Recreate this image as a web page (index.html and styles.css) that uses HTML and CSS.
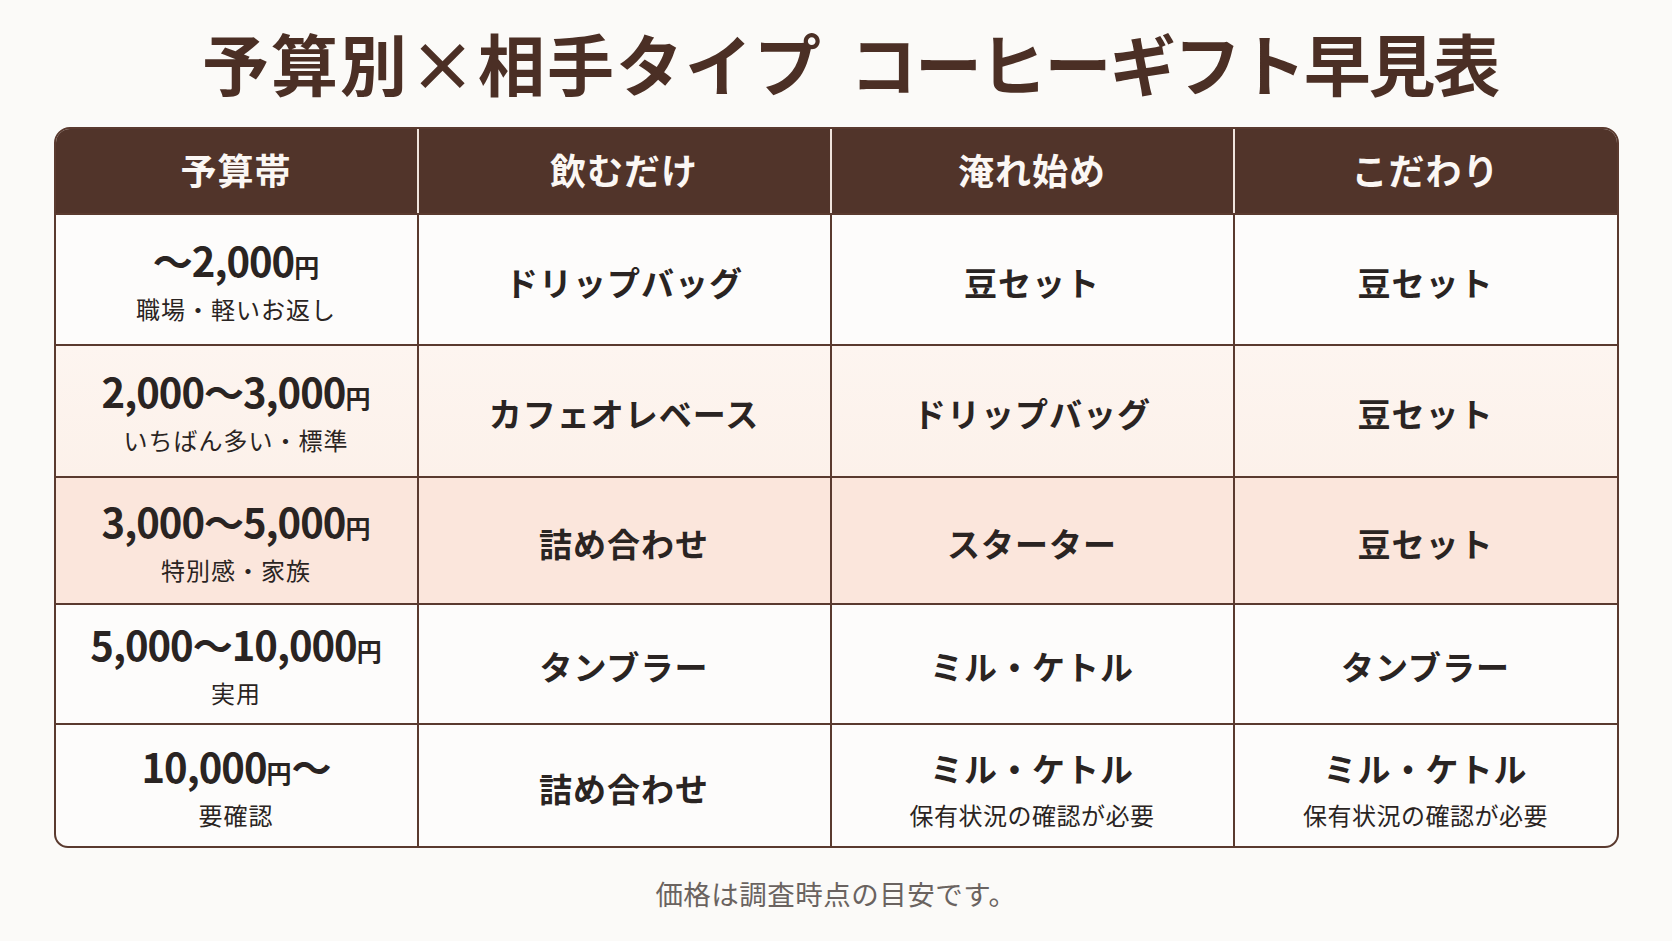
FILE: index.html
```
<!DOCTYPE html>
<html lang="ja">
<head>
<meta charset="utf-8">
<title>予算別×相手タイプ コーヒーギフト早見表</title>
<link rel="stylesheet" href="styles.css">
</head>
<body>
<main class="page">
  <h1 class="title"><span class="t1">予算別×相手タイプ</span> <span class="t2">コーヒーギフト早見表</span></h1>
  <div class="chart">
    <div class="cell head">予算帯</div>
    <div class="cell head">飲むだけ</div>
    <div class="cell head">淹れ始め</div>
    <div class="cell head">こだわり</div>

    <div class="cell band"><div class="price">〜2,000<span class="yen">円</span></div><div class="sub">職場・軽いお返し</div></div>
    <div class="cell item">ドリップバッグ</div>
    <div class="cell item">豆セット</div>
    <div class="cell item">豆セット</div>

    <div class="cell band tint1"><div class="price">2,000〜3,000<span class="yen">円</span></div><div class="sub">いちばん多い・標準</div></div>
    <div class="cell item tint1">カフェオレベース</div>
    <div class="cell item tint1">ドリップバッグ</div>
    <div class="cell item tint1">豆セット</div>

    <div class="cell band tint2"><div class="price">3,000〜5,000<span class="yen">円</span></div><div class="sub">特別感・家族</div></div>
    <div class="cell item tint2">詰め合わせ</div>
    <div class="cell item tint2">スターター</div>
    <div class="cell item tint2">豆セット</div>

    <div class="cell band"><div class="price">5,000〜10,000<span class="yen">円</span></div><div class="sub">実用</div></div>
    <div class="cell item">タンブラー</div>
    <div class="cell item">ミル・ケトル</div>
    <div class="cell item">タンブラー</div>

    <div class="cell band"><div class="price">10,000<span class="yen">円</span>〜</div><div class="sub">要確認</div></div>
    <div class="cell item">詰め合わせ</div>
    <div class="cell item two"><div>ミル・ケトル</div><div class="sub">保有状況の確認が必要</div></div>
    <div class="cell item two"><div>ミル・ケトル</div><div class="sub">保有状況の確認が必要</div></div>
  </div>
  <p class="note">価格は調査時点の目安です。</p>
</main>
</body>
</html>
```
FILE: styles.css
```
* { box-sizing: border-box; }
html, body {
  margin: 0;
  padding: 0;
  background: #fbfaf8;
}
body {
  font-family: "Noto Sans CJK JP", "Noto Sans", sans-serif;
  color: #2a2422;
}
.page {
  width: 1672px;
  height: 941px;
  display: flex;
  flex-direction: column;
  align-items: center;
  padding-top: 26px;
}
.title {
  margin: 0;
  padding-left: 28px;
  font-size: 67px;
  line-height: 72px;
  font-weight: 700;
  color: #4b2f25;
  letter-spacing: 0;
  word-spacing: 12px;
  white-space: nowrap;
}
.t1 { letter-spacing: 2px; }
.t2 { letter-spacing: -2.2px; }
.chart {
  margin-top: 29px;
  width: 1565px;
  display: grid;
  grid-template-columns: 361px 413px 403px 1fr;
  grid-template-rows: 84px 131px 132px 127px 120px 123px;
  border: 2px solid #5a3a2f;
  border-radius: 16px 16px 14px 14px;
  overflow: hidden;
  background: #fdfcfb;
}
.cell {
  display: flex;
  flex-direction: column;
  align-items: center;
  justify-content: center;
  text-align: center;
  border-left: 2px solid #5a3a2f;
  border-top: 2px solid #5a3a2f;
}
.cell:nth-child(4n+1) { border-left: none; }
.head {
  background: #51342a;
  color: #fbf7f4;
  font-size: 36px;
  font-weight: 700;
  letter-spacing: 1px;
  border-top: none;
  border-left-color: #efe4dd;
  padding-bottom: 4px;
}
.head:first-child { border-left: none; }
.item {
  font-size: 33px;
  font-weight: 700;
  letter-spacing: 1px;
  padding-top: 4px;
  line-height: 44px;
}
.item.two { padding-top: 5px; }
.price {
  font-size: 40px;
  font-weight: 700;
  line-height: 48px;
  letter-spacing: -1px;
}
.yen {
  font-size: 25px;
  letter-spacing: 0;
}
.sub {
  font-size: 24px;
  font-weight: 400;
  line-height: 30px;
  margin-top: 4px;
  letter-spacing: 1px;
}
.item .sub {
  margin-top: 10px;
  letter-spacing: 0.5px;
}
.tint1 { background: linear-gradient(180deg, #fdf5f0 0%, #fcf1ea 100%); }
.tint2 { background: #fbe6dc; }
.note {
  margin: 27px 0 0;
  font-size: 27.5px;
  line-height: 36px;
  color: #6a6360;
  letter-spacing: 0.5px;
}
```
